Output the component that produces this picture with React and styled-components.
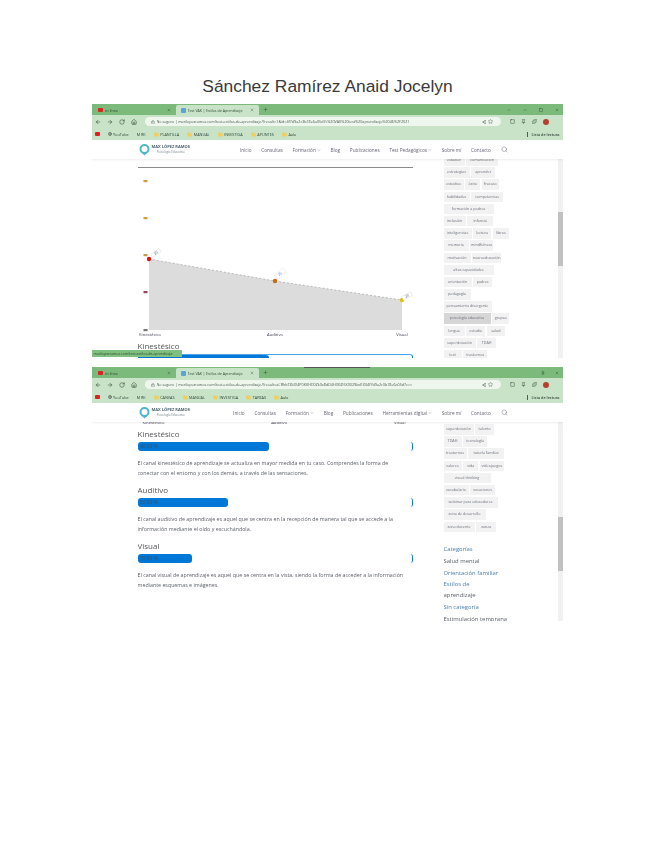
import React from 'react';
import styled, { createGlobalStyle } from 'styled-components';
import { ArrowLeft, ArrowRight, RotateCw, Home, Lock, Star, Search, Minus, Square, X, Plus, Puzzle, ChevronDown, Share2, Pin, Folder, Globe } from 'lucide-react';

const Global = createGlobalStyle`
  html, body { margin: 0; background: #fff; }
  body { font-family: "Open Sans", "Liberation Sans", sans-serif; width: 655px; height: 848px; overflow: hidden; }
`;
const Page = styled.div`display: flex; flex-direction: column; align-items: center; padding-top: 75px;`;
const Title = styled.h1`
  margin: 0 0 6px; height: 23px; font: 400 17.4px/23px "Liberation Sans", Arial, sans-serif; color: #3a3a3a;
`;
const Shots = styled.div`display: flex; flex-direction: column; gap: 9px; width: 471px; margin-left: -1px;`;
const Shot = styled.section`
  position: relative; width: 471px; height: 254px; overflow: hidden; background: #fff;
  filter: blur(0.5px); display: flex; flex-direction: column;
`;
const TabBar = styled.div`
  position: relative; height: 11px; flex: none; background: #7cba7c; display: flex; align-items: flex-end; padding-left: 1px; color: #2f4a2f;
`;
const Tab = styled.div`
  width: 83px; height: 10px; display: flex; align-items: center; gap: 2px; padding: 0 5px; box-sizing: border-box;
  background: ${p => (p.$active ? '#c8e3c8' : 'transparent')}; border-radius: 2px 2px 0 0; font-size: 3.6px; white-space: nowrap; overflow: hidden;
`;
const TabLabel = styled.span`flex: 1; overflow: hidden;`;
const RedDot = styled.i`width: 5px; height: 4px; background: #e02020; border-radius: 1px; flex: none;`;
const BlueDot = styled.i`width: 5px; height: 5px; background: #5aa5d8; border-radius: 1px; flex: none;`;
const NewTab = styled.span`align-self: center; margin-left: 4px; display: flex;`;
const WinControls = styled.div`margin-left: auto; align-self: center; display: flex; gap: ${p => p.$gap}px; padding-right: 4px; color: #244024;`;
const DarkStrip = styled.i`position: absolute; top: 0; left: 212px; width: 66px; height: 1px; background: #555;`;
const Toolbar = styled.div`
  height: 13px; flex: none; background: #c8e3c8; display: flex; align-items: center; padding: 0 14px 0 3px; gap: 6px; color: #2c3a2c;
`;
const Address = styled.div`
  flex: 1; height: 9px; border-radius: 5px; background: #eef6ee; display: flex; align-items: center; gap: 2px; padding: 0 8px 0 6px; margin: 0 3px 0 2px;
  font-size: 3.7px; color: #4a5a50; white-space: nowrap; overflow: hidden; min-width: 0;
`;
const Url = styled.span`flex: 1; overflow: hidden;`;
const Avatar = styled.i`width: 6px; height: 6px; background: #b5402f; border-radius: 50%; flex: none;`;
const Bookmarks = styled.div`
  height: 12px; flex: none; background: #c8e3c8; display: flex; align-items: center; padding: 0 3px; gap: 8px; font-size: 3.8px; color: #34443a;
`;
const Mark = styled.span`display: inline-flex; align-items: center; gap: 1.5px; white-space: nowrap;`;
const ReadList = styled.span`margin-left: auto; white-space: nowrap; font-weight: 600; border-left: 1px solid #556; padding-left: 3px;`;
const SiteNav = styled.nav`
  height: 19px; flex: none; background: #fff; display: flex; align-items: center; padding: 0 55px 0 47px; font-size: 4.7px; color: #667;
  box-shadow: 0 1px 2px rgba(0, 0, 0, .07); position: relative; z-index: 1;
`;
const Brand = styled.div`display: flex; align-items: center; gap: 2px; margin-right: auto;`;
const BrandName = styled.div`font-size: 4px; line-height: 4.5px; font-weight: 700; color: #4d6470; text-align: center;`;
const BrandSub = styled.div`font-size: 3px; font-weight: 400; color: #77858c; text-align: center;`;
const NavItems = styled.div`display: flex; align-items: center; gap: 9.75px;`;
const NavItem = styled.span`display: inline-flex; align-items: center; gap: 1px; white-space: nowrap;`;
const Body = styled.div`
  flex: 1; min-height: 0; display: grid; grid-template-columns: 275px 31px 108px; padding-left: 46px; overflow: hidden; position: relative;
`;
const Main = styled.main`grid-column: 1; overflow: hidden; min-width: 0;`;
const Side = styled.aside`grid-column: 3; overflow: hidden; display: flex; flex-direction: column; gap: 1.7px; margin-top: ${p => p.$top}px;`;
const Scrollbar = styled.div`
  position: absolute; right: 0; top: 0; bottom: 0; width: 5px; background: #f1f1f1; display: flex; flex-direction: column; padding-top: ${p => p.$top}px;
`;
const Thumb = styled.i`display: block; height: 54px; background: #c1c1c1;`;
const TagRow = styled.div`display: flex; gap: 1.7px; flex: none;`;
const Tag = styled.span`
  flex: none; box-sizing: border-box; height: 10.5px; line-height: 10.5px; font-size: 3.7px; text-align: center;
  width: ${p => p.$w}px; background: ${p => (p.$on ? '#d6d6d6' : '#f2f2f2')}; color: #6a6f7a; white-space: nowrap;
`;
const Chart = styled.svg`display: block; width: 275px; height: 181px;`;
const Clipped = styled.div`display: flex; justify-content: space-between; height: 3px; padding: 0 7px 0 5px; font-size: 4.2px; line-height: 2px; color: #445;`;
const ResultList = styled.div`padding-top: 3px;`;
const Heading = styled.h3`margin: 0; font-weight: 400; font-size: 8px; line-height: 12px; color: #55565a; height: 12px;`;
const Track = styled.div`
  position: relative; height: 9px; margin-top: 2px; border-right: 1px solid #0a78d6; border-radius: 0 3px 3px 0;
  border-top: ${p => (p.$line ? '1px solid #4ea3e6' : '0')}; box-sizing: border-box;
`;
const Fill = styled.div`
  height: 9px; background: #0078d7; border-radius: 3px; color: #35506a; font-size: 5px; line-height: 9px; padding-left: 2px; box-sizing: border-box;
`;
const Para = styled.p`margin: 7px 0 6px; font-size: 5.3px; line-height: 10px; color: #5d616a; white-space: nowrap;`;
const Status = styled.div`
  position: absolute; left: 0; bottom: 1px; width: 90px; height: 7px; background: #7fbf7f; color: #2f4a2f; font-size: 3.5px; line-height: 7px; padding-left: 2px; box-sizing: border-box; white-space: nowrap; z-index: 2;
`;
const Widget = styled.ul`list-style: none; margin: 9px 0 0; padding: 0; display: flex; flex-direction: column; font-size: 5.9px; color: #5b6068;`;
const WidgetItem = styled.li`line-height: ${p => p.$lh || 12}px; color: ${p => (p.$blue ? '#4a7fb0' : 'inherit')}; white-space: nowrap;`;

const I = ({ c: C, s = 6, w = 2 }) => <C size={s} strokeWidth={w} />;

function Logo() {
  return (
    <svg width="11" height="12" viewBox="0 0 11 12">
      <circle cx="5.5" cy="5" r="4" fill="none" stroke="#4db7c9" strokeWidth="2" />
      <path d="M3 9 L5.5 11.5 L8 9Z" fill="#4db7c9" />
    </svg>
  );
}

function Window({ variant }) {
  const first = variant === 1;
  const items = first
    ? ['Inicio', 'Consultas', 'Formación', 'Blog', 'Publicaciones', 'Test Pedagógicos', 'Sobre mí', 'Contacto']
    : ['Inicio', 'Consultas', 'Formación', 'Blog', 'Publicaciones', 'Herramientas digital', 'Sobre mí', 'Contacto'];
  return (
    <>
      <TabBar>
        {!first && <DarkStrip />}
        <Tab><RedDot /><TabLabel>en línea</TabLabel><I c={X} s={4} /></Tab>
        <Tab $active><BlueDot /><TabLabel>Test VAK | Estilos de Aprendizaje</TabLabel><I c={X} s={4} /></Tab>
        <NewTab><I c={Plus} s={5} /></NewTab>
        <WinControls $gap={first ? 12 : 10}>
          {first && <I c={ChevronDown} s={4} />}
          {first && <I c={Minus} s={4} />}
          {first ? <I c={Square} s={4} /> : <I c={Pin} s={4} />}
          <I c={X} s={4} />
        </WinControls>
      </TabBar>
      <Toolbar>
        <I c={ArrowLeft} /><I c={ArrowRight} /><I c={RotateCw} /><I c={Home} />
        <Address>
          <I c={Lock} s={4} />
          <Url>{first ? 'No seguro | marilopezramos.com/test-estilos-de-aprendizaje/?result=1&id=4f7d9a2c3b18e6a05d7c%20VAK%20test%20aprendizaje%2046%2F2021' : 'No seguro | marilopezramos.com/test-estilos-de-aprendizaje/?result=aCRhbTZkID4P0KKHD0Zk0x8dD4H3XiD5X0029bd1XX4f7d9a2c3b18e6a05d7c=='}</Url>
          <I c={Share2} s={4} /><I c={Star} s={5} />
        </Address>
        <I c={Square} s={5} /><I c={Pin} s={5} /><I c={Puzzle} s={5} /><Avatar />
      </Toolbar>
      <Bookmarks>
        <RedDot />
        <Mark><I c={Globe} s={4} />YouTube</Mark>
        <Mark>M RK</Mark>
        {(first ? ['PLANTILLA', 'MANUAL', 'INVESTIGA', 'APUNTES', 'Aula'] : ['CANVAS', 'MANUAL', 'INVESTIGA', 'TAREAS', 'Aula']).map(b => (
          <Mark key={b}><Folder size={5} fill="#f1cf5b" stroke="#f1cf5b" />{b}</Mark>
        ))}
        <ReadList>Lista de lectura</ReadList>
      </Bookmarks>
      <SiteNav>
        <Brand>
          <Logo />
          <div><BrandName>MAX LÓPEZ RAMOS</BrandName><BrandSub>Psicología Educativa</BrandSub></div>
        </Brand>
        <NavItems>
          {items.map(t => (
            <NavItem key={t}>{t}{(t === 'Formación' || t.length > 15) && <ChevronDown size={4} />}</NavItem>
          ))}
          <I c={Search} s={7} w={1.5} />
        </NavItems>
      </SiteNav>
    </>
  );
}

const ticks = [22, 59, 96, 133, 171];
function LineChart() {
  return (
    <Chart viewBox="0 0 275 181">
      <line x1="0" y1="8.5" x2="275" y2="8.5" stroke="#8a8a8a" strokeWidth="1" />
      <polygon points="11,100 137,122 264,141 264,171 11,171" fill="#dcdcdc" />
      <polyline points="11,100 137,122 264,141" fill="none" stroke="#999" strokeWidth=".6" strokeDasharray="2 2" />
      {ticks.map(y => <rect key={y} x="5.5" y={y - 1} width="4" height="2.2" fill={y === 133 ? '#a04060' : y === 171 ? '#777' : '#d09a40'} />)}
      <circle cx="11" cy="100" r="2.2" fill="#e01010" />
      <circle cx="137" cy="122" r="2.2" fill="#d0660a" />
      <circle cx="264" cy="141" r="2.2" fill="#e0c010" />
      <g fill="#fff" stroke="#ddd" strokeWidth=".5">
        <rect x="-5" y="-2" width="10" height="4" transform="translate(18 94) rotate(-35)" />
        <rect x="-5" y="-2.5" width="11" height="5" transform="translate(142 115) rotate(-45)" />
        <rect x="-5" y="-2" width="10" height="4" transform="translate(269 137) rotate(-25)" />
      </g>
      <g fontSize="3.4" fontFamily="Open Sans" textAnchor="middle" fill="#355">
        <text x="18" y="95" transform="rotate(-35 18 94)">35</text>
        <text x="142" y="116" transform="rotate(-45 142 115)" fill="#2a78c0">25</text>
        <text x="269" y="138" transform="rotate(-25 269 137)">20</text>
      </g>
      <g fontSize="4.2" fontFamily="Open Sans" textAnchor="middle" fill="#445">
        <text x="12" y="177">Kinestésico</text>
        <text x="137" y="177">Auditivo</text>
        <text x="264" y="177">Visual</text>
      </g>
    </Chart>
  );
}

const top = [
  [['estudiar', 21], ['comunicación', 32]],
  [['estrategias', 26], ['aprender', 24]],
  [['estudios', 20], ['éxito', 15], ['fracaso', 17]],
  [['habilidades', 26], ['competencias', 32]],
  [['formación a padres', 50]],
  [['inclusión', 22], ['infancia', 26]],
  [['inteligencias', 28], ['lectura', 18], ['libros', 16]],
  [['memoria', 25], ['mindfulness', 23]],
  [['motivación', 27], ['neuroeducación', 29]],
  [['altas capacidades', 50]],
  [['orientación', 28], ['padres', 19]],
  [['pedagogía', 27]],
  [['pensamiento divergente', 48]],
  [['psicología educativa', 47, true], ['grupos', 17]],
  [['lengua', 21], ['estudio', 19], ['salud', 18]],
  [['superdotación', 32], ['TDAH', 19]],
  [['test', 18], ['trastornos', 24]],
];
const bottom = [
  [['superdotación', 30], ['talento', 19]],
  [['TDAH', 18], ['tecnología', 24]],
  [['trastornos', 23], ['tutoría familiar', 36]],
  [['valores', 18], ['vida', 15], ['videojuegos', 24]],
  [['visual thinking', 47]],
  [['vocabulario', 25], ['vocaciones', 25]],
  [['webinar para educadores', 54]],
  [['zona de desarrollo', 42]],
  [['zona docente', 31], ['zonas', 20]],
];

const Tags = ({ rows }) => rows.map((r, i) => (
  <TagRow key={i}>{r.map(([t, w, on]) => <Tag key={t} $w={w} $on={on}>{t}</Tag>)}</TagRow>
));

const results = [
  ['Kinestésico', 48, '48.00 %', <>El canal kinestésico de aprendizaje se actualiza en mayor medida en tu caso. Comprendes la forma de<br />conectar con el entorno y con los demás, a través de las sensaciones.</>],
  ['Auditivo', 33, '33.00 %', <>El canal auditivo de aprendizaje es aquel que se centra en la recepción de manera tal que se accede a la<br />información mediante el oído y escuchándola.</>],
  ['Visual', 20, '19.00 %', <>El canal visual de aprendizaje es aquel que se centra en la vista, siendo la forma de acceder a la información<br />mediante esquemas e imágenes.</>],
];

export default function App() {
  return (
    <Page>
      <Global />
      <Title>Sánchez Ramírez Anaid Jocelyn</Title>
      <Shots>
        <Shot>
          <Window variant={1} />
          <Body>
            <Main>
              <LineChart />
              <Heading>Kinestésico</Heading>
              <Track $line><Fill style={{ width: '48%' }} /></Track>
            </Main>
            <Side $top={-4}>
              <Tags rows={top} />
            </Side>
            <Scrollbar $top={53}><Thumb /></Scrollbar>
            <Status>marilopezramos.com/test-estilos-de-aprendizaje</Status>
          </Body>
        </Shot>
        <Shot>
          <Window variant={2} />
          <Body>
            <Main>
              <Clipped><span>Kinestésico</span><span>Auditivo</span><span>Visual</span></Clipped>
              <ResultList>
                {results.map(([h, w, label, text]) => (
                  <div key={h}>
                    <Heading>{h}</Heading>
                    <Track><Fill style={{ width: `${w}%` }}>{label}</Fill></Track>
                    <Para>{text}</Para>
                  </div>
                ))}
              </ResultList>
            </Main>
            <Side $top={2}>
              <Tags rows={bottom} />
              <Widget>
                <WidgetItem $blue>Categorías</WidgetItem>
                <WidgetItem>Salud mental</WidgetItem>
                <WidgetItem $blue>Orientación familiar</WidgetItem>
                <WidgetItem $blue $lh={10}>Estilos de</WidgetItem>
                <WidgetItem>aprendizaje</WidgetItem>
                <WidgetItem $blue>Sin categoría</WidgetItem>
                <WidgetItem>Estimulación temprana</WidgetItem>
              </Widget>
            </Side>
            <Scrollbar $top={95}><Thumb /></Scrollbar>
          </Body>
        </Shot>
      </Shots>
    </Page>
  );
}
